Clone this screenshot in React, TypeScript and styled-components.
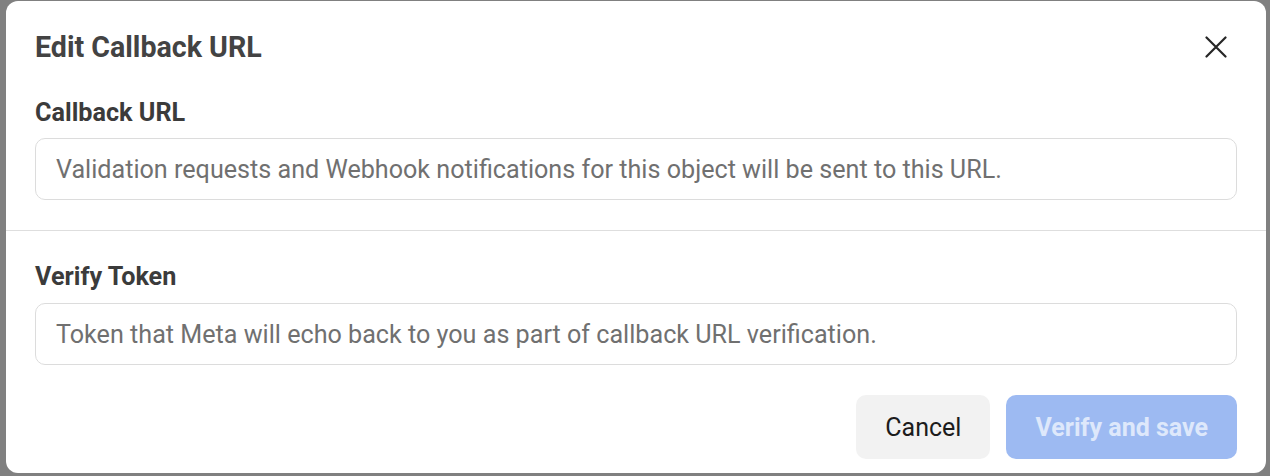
import React from 'react';
import styled, { createGlobalStyle } from 'styled-components';

const GlobalStyle = createGlobalStyle`
  html, body {
    margin: 0;
    padding: 0;
    background: #808080;
    font-family: Roboto, "Liberation Sans", Arial, sans-serif;
  }
`;

const Overlay = styled.div`
  width: 1270px;
  height: 476px;
  box-sizing: border-box;
  padding: 1px 4px 3px 6px;
  display: flex;
  background: #808080;
`;

const Dialog = styled.div`
  flex: 1;
  display: flex;
  flex-direction: column;
  background: #fff;
  border-radius: 12px;
  overflow: hidden;
`;

const Header = styled.div`
  display: flex;
  align-items: center;
  justify-content: space-between;
  padding: 29px 29px 0 29px;
`;

const Title = styled.h1`
  margin: 0;
  font-size: 28.6px;
  line-height: 34px;
  font-weight: 700;
  color: #434343;
`;

const CloseButton = styled.button`
  border: 0;
  background: transparent;
  padding: 0;
  margin-right: 10px;
  display: flex;
  cursor: pointer;
`;

const Section = styled.div<{ $top: number; $bottom: number }>`
  padding: ${(p) => p.$top}px 29px ${(p) => p.$bottom}px;
  display: flex;
  flex-direction: column;
`;

const Label = styled.label<{ $gap: number }>`
  font-size: 25.2px;
  line-height: 30px;
  font-weight: 700;
  color: #3b3b3b;
  margin-bottom: ${(p) => p.$gap}px;
`;

const Input = styled.input`
  height: 62px;
  box-sizing: border-box;
  border: 1px solid #dcdcdc;
  border-radius: 10px;
  padding: 0 20px;
  font-family: inherit;
  font-size: 25.15px;
  color: #1c1c1c;
  outline: none;
  &::placeholder {
    color: #707070;
  }
`;

const Divider = styled.hr`
  margin: 0;
  border: 0;
  border-top: 1px solid #dedede;
`;

const Footer = styled.div`
  display: flex;
  justify-content: flex-end;
  gap: 16px;
  padding: 0 29px;
`;

const Button = styled.button<{ $primary?: boolean }>`
  height: 64px;
  border: 0;
  border-radius: 10px;
  font-family: inherit;
  font-size: 25px;
  padding: 0 29px;
  font-weight: ${(p) => (p.$primary ? 700 : 400)};
  background: ${(p) => (p.$primary ? '#9dbaf2' : '#f2f2f2')};
  color: ${(p) => (p.$primary ? '#dee8fb' : '#1c1c1c')};
  cursor: ${(p) => (p.$primary ? 'default' : 'pointer')};
`;

const CloseIcon = () => (
  <svg width="22" height="22" viewBox="0 0 22 22" fill="none">
    <path d="M1.5 1.5L20.5 20.5M20.5 1.5L1.5 20.5" stroke="#262626" strokeWidth="2.2" strokeLinecap="round" />
  </svg>
);

export default function App() {
  return (
    <>
      <GlobalStyle />
      <Overlay>
        <Dialog>
          <Header>
            <Title>Edit Callback URL</Title>
            <CloseButton aria-label="Close">
              <CloseIcon />
            </CloseButton>
          </Header>
          <Section $top={34} $bottom={30}>
            <Label $gap={10}>Callback URL</Label>
            <Input placeholder="Validation requests and Webhook notifications for this object will be sent to this URL." />
          </Section>
          <Divider />
          <Section $top={31} $bottom={30}>
            <Label $gap={11}>Verify Token</Label>
            <Input placeholder="Token that Meta will echo back to you as part of callback URL verification." />
          </Section>
          <Footer>
            <Button>Cancel</Button>
            <Button $primary disabled>
              Verify and save
            </Button>
          </Footer>
        </Dialog>
      </Overlay>
    </>
  );
}
